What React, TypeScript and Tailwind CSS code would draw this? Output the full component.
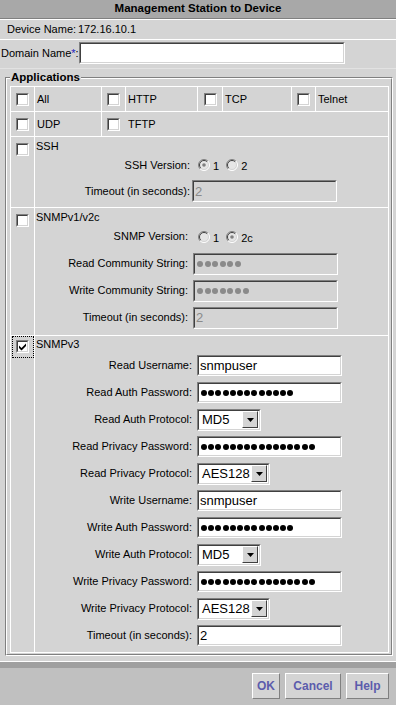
import React from "react";

type SProps = { className: string; bg?: string; center?: boolean; children?: React.ReactNode };

function Sunken({ className, bg = "bg-white", center = false, children }: SProps) {
  return (
    <div className={`${className} shrink-0 border border-t-[#808080] border-l-[#808080] border-b-white border-r-white`}>
      <div
        className={`h-full w-full border border-t-[#404040] border-l-[#404040] border-b-[#d4d4d4] border-r-[#d4d4d4] ${bg} flex items-center overflow-hidden ${center ? "justify-center" : ""}`}
      >
        {children}
      </div>
    </div>
  );
}

function Checkbox({ checked = false }: { checked?: boolean }) {
  return (
    <Sunken className="w-[13px] h-[13px]" center>
      {checked && (
        <svg width="9" height="9" viewBox="0 0 9 9">
          <path d="M1 3.5 L3.5 6 L8 1.5 L8 4 L3.5 8.5 L1 6 Z" fill="#000" />
        </svg>
      )}
    </Sunken>
  );
}

function Radio({ checked = false }: { checked?: boolean }) {
  return (
    <svg width="12" height="12" viewBox="0 0 12 12" className="shrink-0">
      <circle cx="6" cy="6" r="5.5" fill="#e6e6e6" />
      <path d="M2.1 9.9 A5.5 5.5 0 0 1 9.9 2.1" fill="none" stroke="#808080" strokeWidth="1" />
      <path d="M9.9 2.1 A5.5 5.5 0 0 1 2.1 9.9" fill="none" stroke="#ffffff" strokeWidth="1" />
      <path d="M2.8 9.2 A4.5 4.5 0 0 1 9.2 2.8" fill="none" stroke="#404040" strokeWidth="1" />
      <path d="M9.2 2.8 A4.5 4.5 0 0 1 2.8 9.2" fill="none" stroke="#d4d4d4" strokeWidth="1" />
      {checked && <circle cx="6" cy="6" r="1.8" fill="#808080" />}
    </svg>
  );
}

function Dots({ n, color }: { n: number; color: "black" | "gray" }) {
  return (
    <div className="flex items-center pl-[2px]">
      {Array.from({ length: n }).map((_, i) =>
        color === "black" ? (
          <span key={i} className="w-[6px] h-[6px] rounded-full bg-black mr-[1.2px] shrink-0" />
        ) : (
          <span key={i} className="w-[6px] h-[6px] rounded-full bg-[#8a8a8a] mr-[1.6px] shrink-0" />
        )
      )}
    </div>
  );
}

function Select({ value, className }: { value: string; className: string }) {
  return (
    <Sunken className={className}>
      <div className="flex-1 pl-[3px] text-[13px] leading-none">{value}</div>
      <div className="w-[16px] h-[17px] mr-[1px] bg-[#d4d4d4] border border-t-white border-l-white border-b-[#404040] border-r-[#404040] flex items-center justify-center shrink-0">
        <svg width="7" height="4" viewBox="0 0 7 4">
          <path d="M0 0 H7 L3.5 4 Z" fill="#000" />
        </svg>
      </div>
    </Sunken>
  );
}

function Row({
  label,
  h,
  lw,
  ml,
  children,
}: {
  label: string;
  h: string;
  lw: string;
  ml: string;
  children: React.ReactNode;
}) {
  return (
    <div className={`${h} flex items-center`}>
      <div className={`${lw} text-right shrink-0`}>{label}</div>
      <div className={`${ml} flex items-center`}>{children}</div>
    </div>
  );
}

function InputText({ value, className = "w-[145px] h-[21px]" }: { value?: string; className?: string }) {
  return (
    <Sunken className={className}>
      <span className="pl-[1px] text-[13px] leading-none">{value}</span>
    </Sunken>
  );
}

function Disabled({ children }: { children?: React.ReactNode }) {
  return (
    <Sunken className="w-[145px] h-[22px]" bg="bg-[#d4d4d4]">
      {children}
    </Sunken>
  );
}

export default function App() {
  return (
    <div className="w-[396px] h-[705px] bg-[#d4d4d4] flex flex-col overflow-hidden font-['Liberation_Sans',Arial,sans-serif] text-[11px] text-black leading-none">
      {/* title */}
      <div className="h-[19px] shrink-0 bg-[#a8a8a8] border-b border-[#808080] flex items-center justify-center font-bold text-[11.5px]">
        Management Station to Device
      </div>
      <div className="h-px bg-white shrink-0" />
      <div className="h-[19px] flex items-center pl-[7px] shrink-0">
        <span className="w-[71px]">Device Name:</span>
        <span>172.16.10.1</span>
      </div>
      <div className="h-px bg-white shrink-0" />
      <div className="h-[28px] flex items-start pt-[2px] pl-[1px] shrink-0">
        <span className="w-[78px] h-[22px] flex items-center">
          Domain Name<span className="text-[#2020c0]">*</span>:
        </span>
        <Sunken className="w-[266px] h-[22px]" />
      </div>
      <div className="h-px bg-[#e2e2e2] shrink-0" />

      {/* fieldset */}
      <div className="relative mt-[8px] ml-[5px] w-[388px] shrink-0 border border-t-[#808080] border-l-[#808080] border-b-white border-r-white">
        <div className="absolute left-[4px] top-[-7px] px-[1px] bg-[#d4d4d4] font-bold text-[11.5px] leading-[13px]">
          Applications
        </div>
        <div className="border border-t-white border-l-white border-b-[#808080] border-r-[#808080] pt-[7px] pl-[3px] pr-[2px] pb-[1px]">
          <div className="w-[379px] border border-white">
            {/* row 1 */}
            <div className="flex h-[24px]">
              <div className="w-[23px] flex items-center justify-center">
                <Checkbox />
              </div>
              <div className="w-[67px] border-l border-white flex items-center pl-[2px]">All</div>
              <div className="w-[24px] border-l border-white flex items-center justify-center">
                <Checkbox />
              </div>
              <div className="w-[72px] border-l border-white flex items-center pl-[2px]">HTTP</div>
              <div className="w-[25px] border-l border-white flex items-center justify-center">
                <Checkbox />
              </div>
              <div className="w-[69px] border-l border-white flex items-center pl-[2px]">TCP</div>
              <div className="w-[24px] border-l border-white flex items-center justify-center">
                <Checkbox />
              </div>
              <div className="flex-1 border-l border-white flex items-center pl-[2px]">Telnet</div>
            </div>
            {/* row 2 */}
            <div className="flex h-[25px] border-t border-white">
              <div className="w-[23px] flex items-center justify-center">
                <Checkbox />
              </div>
              <div className="w-[67px] border-l border-white flex items-center pl-[2px]">UDP</div>
              <div className="w-[24px] border-l border-white flex items-center justify-center">
                <Checkbox />
              </div>
              <div className="flex-1 flex items-center pl-[3px]">TFTP</div>
            </div>

            {/* SSH */}
            <div className="flex border-t border-white">
              <div className="w-[23px] flex justify-center pt-[6px]">
                <Checkbox />
              </div>
              <div className="flex-1 border-l border-white pt-[3px] pb-[3px]">
                <div className="h-[12px] pl-[1px] flex items-center">SSH</div>
                <Row label="SSH Version:" h="h-[26px]" lw="w-[155px]" ml="ml-[8px]">
                  <Radio checked />
                  <span className="ml-[3px] mr-[7px] mt-[3px]">1</span>
                  <Radio />
                  <span className="ml-[3px] mt-[3px]">2</span>
                </Row>
                <Row label="Timeout (in seconds):" h="h-[26px]" lw="w-[155px]" ml="ml-[2px]">
                  <Disabled>
                    <span className="pl-[1px] text-[13px] text-[#8a8a8a]">2</span>
                  </Disabled>
                </Row>
              </div>
            </div>

            {/* SNMPv1/v2c */}
            <div className="flex border-t border-white">
              <div className="w-[23px] flex justify-center pt-[6px]">
                <Checkbox />
              </div>
              <div className="flex-1 border-l border-white pt-[3px] pb-[4px]">
                <div className="h-[12px] pl-[1px] flex items-center">SNMPv1/v2c</div>
                <Row label="SNMP Version:" h="h-[27px]" lw="w-[153px]" ml="ml-[10px]">
                  <Radio />
                  <span className="ml-[3px] mr-[7px] mt-[3px]">1</span>
                  <Radio checked />
                  <span className="ml-[3px] mt-[3px]">2c</span>
                </Row>
                <Row label="Read Community String:" h="h-[27px]" lw="w-[153px]" ml="ml-[5px]">
                  <Disabled>
                    <Dots n={6} color="gray" />
                  </Disabled>
                </Row>
                <Row label="Write Community String:" h="h-[27px]" lw="w-[153px]" ml="ml-[5px]">
                  <Disabled>
                    <Dots n={7} color="gray" />
                  </Disabled>
                </Row>
                <Row label="Timeout (in seconds):" h="h-[27px]" lw="w-[153px]" ml="ml-[5px]">
                  <Disabled>
                    <span className="pl-[1px] text-[13px] text-[#8a8a8a]">2</span>
                  </Disabled>
                </Row>
              </div>
            </div>

            {/* SNMPv3 */}
            <div className="flex border-t border-white">
              <div className="w-[23px] flex justify-center">
                <div className="w-[22px] h-[22px] border border-dotted border-black flex justify-center pt-[3px]">
                  <Checkbox checked />
                </div>
              </div>
              <div className="flex-1 border-l border-white pt-[2px] pb-[3px]">
                <div className="h-[12px] mb-[2px] pl-[1px] flex items-center">SNMPv3</div>
                <Row label="Read Username:" h="h-[27px]" lw="w-[157px]" ml="ml-[5px]">
                  <InputText value="snmpuser" />
                </Row>
                <Row label="Read Auth Password:" h="h-[27px]" lw="w-[157px]" ml="ml-[5px]">
                  <Sunken className="w-[145px] h-[21px]">
                    <Dots n={13} color="black" />
                  </Sunken>
                </Row>
                <Row label="Read Auth Protocol:" h="h-[27px]" lw="w-[157px]" ml="ml-[5px]">
                  <Select value="MD5" className="w-[64px] h-[22px]" />
                </Row>
                <Row label="Read Privacy Password:" h="h-[27px]" lw="w-[157px]" ml="ml-[5px]">
                  <Sunken className="w-[145px] h-[21px]">
                    <Dots n={16} color="black" />
                  </Sunken>
                </Row>
                <Row label="Read Privacy Protocol:" h="h-[27px]" lw="w-[157px]" ml="ml-[5px]">
                  <Select value="AES128" className="w-[73px] h-[22px]" />
                </Row>
                <Row label="Write Username:" h="h-[27px]" lw="w-[157px]" ml="ml-[5px]">
                  <InputText value="snmpuser" />
                </Row>
                <Row label="Write Auth Password:" h="h-[27px]" lw="w-[157px]" ml="ml-[5px]">
                  <Sunken className="w-[145px] h-[21px]">
                    <Dots n={13} color="black" />
                  </Sunken>
                </Row>
                <Row label="Write Auth Protocol:" h="h-[27px]" lw="w-[157px]" ml="ml-[5px]">
                  <Select value="MD5" className="w-[64px] h-[22px]" />
                </Row>
                <Row label="Write Privacy Password:" h="h-[27px]" lw="w-[157px]" ml="ml-[5px]">
                  <Sunken className="w-[145px] h-[21px]">
                    <Dots n={16} color="black" />
                  </Sunken>
                </Row>
                <Row label="Write Privacy Protocol:" h="h-[27px]" lw="w-[157px]" ml="ml-[5px]">
                  <Select value="AES128" className="w-[73px] h-[22px]" />
                </Row>
                <Row label="Timeout (in seconds):" h="h-[27px]" lw="w-[157px]" ml="ml-[5px]">
                  <InputText value="2" />
                </Row>
              </div>
            </div>
          </div>
        </div>
      </div>

      <div className="flex-1" />
      <div className="h-px bg-white shrink-0" />
      <div className="h-[6px] bg-[#a0a0a0] shrink-0" />
      <div className="h-[37px] bg-[#c0c0c0] shrink-0 flex justify-end items-start pt-[5px] pr-[7px] gap-[5px]">
        {[
          ["OK", "w-[28px]"],
          ["Cancel", "w-[56px]"],
          ["Help", "w-[43px]"],
        ].map(([t, w]) => (
          <div
            key={t}
            className={`${w} h-[26px] bg-[#d4d4d4] border border-t-white border-l-white border-b-[#808080] border-r-[#808080] flex items-center justify-center font-bold text-[12px] text-[#5c5cac]`}
          >
            {t}
          </div>
        ))}
      </div>
    </div>
  );
}
